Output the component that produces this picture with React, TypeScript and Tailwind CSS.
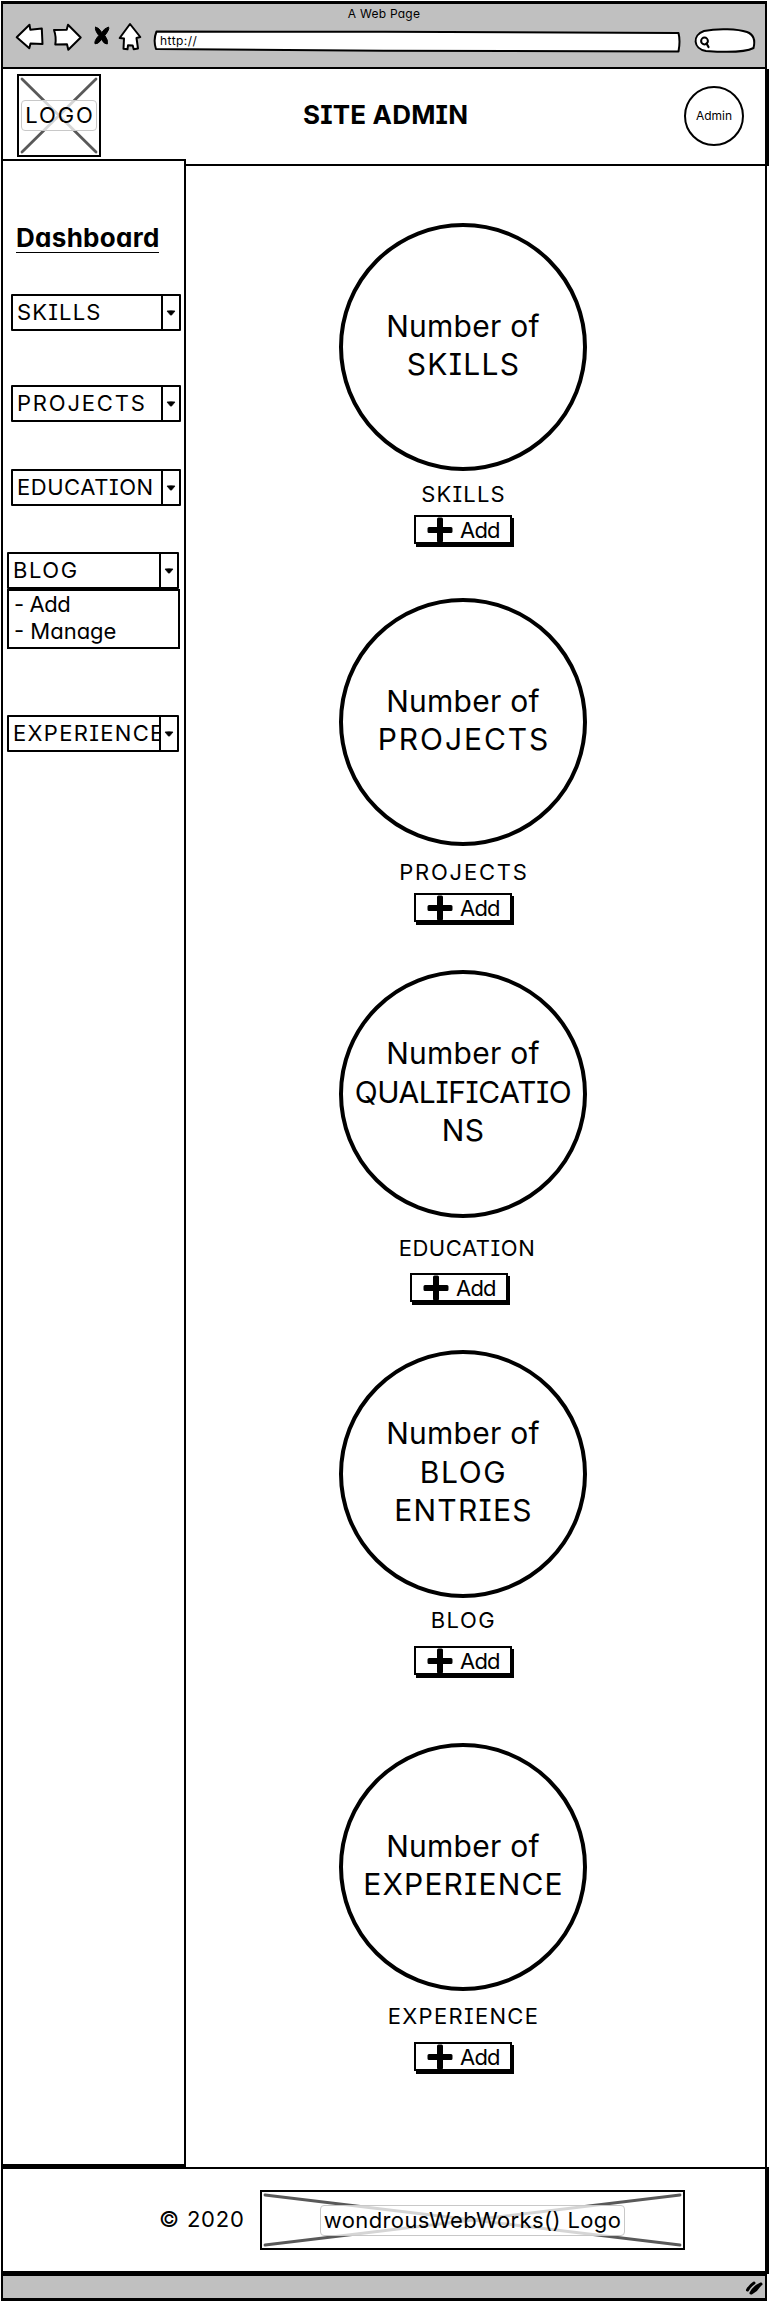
import type { ReactNode } from "react";

type Section = {
  title: string;
  titleClass: string;
  lines: { text: string; className: string }[];
  cardClass: string;
  labelClass: string;
  buttonClass: string;
};

const sections: Section[] = [
  {
    title: "SKILLS",
    titleClass: "tracking-[1.17px] pl-[1px]",
    lines: [{ text: "SKILLS", className: "tracking-[1.3px] pl-[1px]" }],
    cardClass: "mt-[57px]",
    labelClass: "mt-[11px]",
    buttonClass: "mt-[9px]",
  },
  {
    title: "PROJECTS",
    titleClass: "tracking-[1.8px] pl-[2px]",
    lines: [{ text: "PROJECTS", className: "tracking-[1.94px] pl-[2px]" }],
    cardClass: "mt-[51px]",
    labelClass: "mt-[14px]",
    buttonClass: "mt-[9px]",
  },
  {
    title: "EDUCATION",
    titleClass: "tracking-[0.55px] pl-[8px]",
    lines: [
      { text: "QUALIFICATIO", className: "tracking-[-0.41px]" },
      { text: "NS", className: "tracking-[0.4px]" },
    ],
    cardClass: "mt-[45px]",
    labelClass: "mt-[18px]",
    buttonClass: "mt-[13px] mr-[8px]",
  },
  {
    title: "BLOG",
    titleClass: "tracking-[1.54px] pl-[1px]",
    lines: [
      { text: "BLOG", className: "tracking-[1.63px] pl-[1px]" },
      { text: "ENTRIES", className: "tracking-[1.26px] pl-[1px]" },
    ],
    cardClass: "mt-[45px]",
    labelClass: "mt-[10px]",
    buttonClass: "mt-[14px]",
  },
  {
    title: "EXPERIENCE",
    titleClass: "tracking-[1.31px] pl-[1px]",
    lines: [{ text: "EXPERIENCE", className: "tracking-[1.18px] pl-[1px]" }],
    cardClass: "mt-[65px]",
    labelClass: "mt-[13px]",
    buttonClass: "mt-[14px]",
  },
];

function NavIcons() {
  return (
    <svg
      className="ml-[12px] mt-[16px] h-[34px] w-[130px] shrink-0"
      viewBox="15 20 130 34"
      fill="#fff"
      stroke="#000"
      strokeWidth="2"
      strokeLinejoin="round"
      strokeLinecap="round"
    >
      <path d="M16.7 37.3 L29.5 24.8 L30.3 29.7 L41.8 28.6 L42.5 44 L30.5 43.6 L29.3 48.2 Z" />
      <path d="M54 30 L66.7 29.8 L68 24.7 L80.7 37.5 L68.3 49.7 L67 44.3 L55.3 44.5 Q56.5 37 54 30 Z" />
      <path
        d="M95.5 27.3 Q98.5 27 101.8 32.5 Q104 28.5 108.5 27 Q110 29 104.8 35.5 Q108.5 40.5 107.3 44 Q104.5 44.5 101.5 39.5 Q98 44.5 95 43.8 Q94 41 98.8 35.5 Q94.5 30 95.5 27.3 Z"
        fill="#000"
        strokeWidth="1"
      />
      <path d="M130 24 L140.3 37 L136.5 38 L138 48.5 L133.7 49.3 L132.7 45.5 L128 45.3 L127.5 49.3 L123.5 48.8 L124 38.5 L119.7 38 Z" />
    </svg>
  );
}

function BrowserBar() {
  return (
    <div className="h-[65px] shrink-0 border-b-[2px] border-black bg-[#c0c0c0]">
      <div className="flex h-[18px] items-center justify-center pt-[1px] text-[12px] leading-[16px] tracking-[0.25px]">
        A Web Page
      </div>
      <div className="-mt-[18px] flex items-start">
        <NavIcons />
        <svg className="ml-[7px] mt-[24px] h-[25px] w-[529px] shrink-0 overflow-visible" viewBox="152 28 529 25" fill="#fff" stroke="#000" strokeWidth="2" strokeLinejoin="round">
          <path d="M156.5 31.5 L384 31.8 L678.5 33 Q680.5 41 678.5 51.5 L384 50.8 L156 49 Q153 40 156.5 31.5 Z" />
          <text x="160" y="44.6" fill="#000" stroke="none" fontSize="12" letterSpacing="0.45">
            http://
          </text>
        </svg>
        <svg className="ml-[14px] mt-[23px] h-[27px] w-[62px] shrink-0 overflow-visible" viewBox="695 27 62 27" fill="#fff" stroke="#000" strokeWidth="2">
          <path d="M704 31 C718 28 738 29 747 32 C755 35 755 42 753.5 48 C745 52.5 727 52.5 706 51 C693 49 692 35 704 31 Z" />
          <circle cx="704.5" cy="41" r="3.4" />
          <path d="M706.5 43.5 L708.5 47" strokeLinecap="round" strokeWidth="2.2" />
        </svg>
      </div>
    </div>
  );
}

function Cross({ width, height }: { width: number; height: number }) {
  return (
    <svg className="absolute inset-0 h-full w-full" viewBox={`0 0 ${width} ${height}`} stroke="#595959" strokeWidth="2.8" strokeLinecap="round">
      <path d={`M3 3 L${width - 3} ${height - 3} M${width - 3} 3 L3 ${height - 3}`} />
    </svg>
  );
}

function Header() {
  return (
    <header className="mr-[-4px] flex h-[97px] shrink-0 items-start border-b-[2.5px] border-r-[2px] border-black">
      <div className="relative ml-[14px] mt-[5px] flex h-[83px] w-[84px] items-center justify-center border-[2px] border-black">
        <Cross width={80} height={79} />
        <div className="relative flex h-[31px] w-[76px] shrink-0 items-center justify-center rounded-[4px] border border-[#c8c8c8] bg-white/75 pl-[2px] text-[22px] tracking-[1.94px]">
          LOGO
        </div>
      </div>
      <h1 className="ml-[202px] mt-[34.5px] text-[26px] leading-[22px] font-bold tracking-[0.18px] whitespace-nowrap">SITE ADMIN</h1>
      <div className="ml-auto mr-[23px] mt-[17px] flex h-[60px] w-[60px] items-center justify-center rounded-full border-[2px] border-black text-[12px]">
        Admin
      </div>
    </header>
  );
}

function Select({ label, className, textClass }: { label: string; className: string; textClass: string }) {
  return (
    <div className={`flex h-[37px] shrink-0 rounded-[1px] border-2 border-black ${className}`}>
      <div className={`flex min-w-0 flex-1 items-center overflow-hidden pb-[1px] pl-[4px] text-[22px] ${textClass}`}>{label}</div>
      <div className="flex w-[18px] shrink-0 items-center justify-center border-l-2 border-black">
        <svg className="h-[6px] w-[10px]" viewBox="0 0 10 6">
          <path d="M1 1 Q5 0.4 9 1 L5.6 5 Q5 5.5 4.4 5 Z" fill="#000" stroke="#000" strokeWidth="0.7" strokeLinejoin="round" />
        </svg>
      </div>
    </div>
  );
}

function Sidebar() {
  return (
    <aside className="relative -mt-[7px] flex h-[2008px] w-[183px] shrink-0 flex-col border-t-[2px] border-r-[2.5px] border-b-[3px] border-black bg-white">
      <h2 className="ml-[13px] mt-[64px] h-[28px] w-[143px] border-b border-black text-[26px] leading-[26px] font-bold tracking-[0.3px]">
        Dashboard
      </h2>
      <Select label="SKILLS" className="ml-[8px] mt-[41px] w-[170px]" textClass="tracking-[1.17px]" />
      <Select label="PROJECTS" className="ml-[8px] mt-[54px] w-[170px]" textClass="tracking-[1.8px]" />
      <Select label="EDUCATION" className="ml-[8px] mt-[47px] w-[170px]" textClass="tracking-[0.55px]" />
      <Select label="BLOG" className="ml-[4px] mt-[46px] w-[172px]" textClass="tracking-[1.54px]" />
      <ul className="ml-[4px] flex h-[60px] w-[173px] shrink-0 flex-col border-[2px] border-black pl-[5px] text-[22px] leading-[27px]">
        <li className="tracking-[-0.4px]">-&nbsp;Add</li>
        <li className="tracking-[0px]">-&nbsp;Manage</li>
      </ul>
      <Select label="EXPERIENCE" className="ml-[4px] mt-[66px] w-[172px]" textClass="tracking-[1.31px]" />
    </aside>
  );
}

function AddButton({ className }: { className: string }) {
  return (
    <button
      className={`flex h-[29px] w-[98px] shrink-0 items-center border-2 border-black bg-white pl-[11px] text-[22px] leading-[24px] tracking-[-0.8px] shadow-[2px_3px_0_0_#000] ${className}`}
    >
      <svg className="mr-[7px] h-[26px] w-[26px] shrink-0" viewBox="0 0 26 26">
        <path d="M10 2 Q10 0.5 11.5 0.5 H14.5 Q16 0.5 16 2 V10 H24 Q25.5 10 25.5 11.5 V14.5 Q25.5 16 24 16 H16 V24 Q16 25.5 14.5 25.5 H11.5 Q10 25.5 10 24 V16 H2 Q0.5 16 0.5 14.5 V11.5 Q0.5 10 2 10 H10 Z" />
      </svg>
      Add
    </button>
  );
}

function StatCard({ section }: { section: Section }) {
  return (
    <section className={`flex w-[248px] shrink-0 flex-col items-center ${section.cardClass}`}>
      <div className="flex h-[248px] w-[248px] flex-col items-center justify-center rounded-full border-[4px] border-black pb-[4px] text-[30px] leading-[38.5px] whitespace-nowrap">
        <span className="tracking-[0.26px]">Number of</span>
        {section.lines.map((line) => (
          <span key={line.text} className={line.className}>
            {line.text}
          </span>
        ))}
      </div>
      <h3 className={`text-[22px] leading-[24px] ${section.titleClass} ${section.labelClass}`}>{section.title}</h3>
      <AddButton className={section.buttonClass} />
      <div className="h-[3px]" />
    </section>
  );
}

function Footer() {
  return (
    <footer className="mr-[-4px] flex h-[107px] shrink-0 items-start border-t-[2px] border-r-[2px] border-b-[3px] border-black">
      <p className="ml-[156px] mt-[38px] w-[101px] text-[22px] leading-[24px] tracking-[0.8px] whitespace-nowrap">© 2020</p>
      <div className="relative mt-[21px] flex h-[60px] w-[425px] items-center justify-center border-[2px] border-black">
        <Cross width={421} height={56} />
        <div className="relative flex h-[31px] w-[305px] items-center justify-center rounded-[4px] border border-[#c8c8c8] bg-white/75 text-[22px] tracking-[0.39px] whitespace-nowrap">
          wondrousWebWorks() Logo
        </div>
      </div>
    </footer>
  );
}

function Page({ children }: { children: ReactNode }) {
  return (
    <div className="h-[2302px] w-[769px] overflow-hidden bg-white pt-[1px] pl-[1px] font-['Inter',sans-serif] text-black [font-feature-settings:'cv08','cv11']">
      <div className="flex h-[2300px] w-[766px] flex-col border-t-[3px] border-r-[2px] border-b-[3px] border-l-[2px] border-black">
        {children}
      </div>
    </div>
  );
}

export default function App() {
  return (
    <Page>
      <BrowserBar />
      <Header />
      <div className="flex h-[2001px] shrink-0">
        <Sidebar />
        <main className="flex flex-1 flex-col pl-[153px]">
          {sections.map((section) => (
            <StatCard key={section.title} section={section} />
          ))}
        </main>
      </div>
      <Footer />
      <div className="flex flex-1 items-center justify-end border-t-[2px] border-black bg-[#c0c0c0] pt-[2px] pr-[2px]">
        <svg className="h-[14px] w-[18px]" viewBox="0 0 18 14" stroke="#000" strokeWidth="3" strokeLinecap="round">
          <path d="M2.5 9 Q5 4.5 9 2 M6 12 Q9 6 16 3 M6.5 12 Q12 9 15 3.5" fill="none" />
        </svg>
      </div>
    </Page>
  );
}
